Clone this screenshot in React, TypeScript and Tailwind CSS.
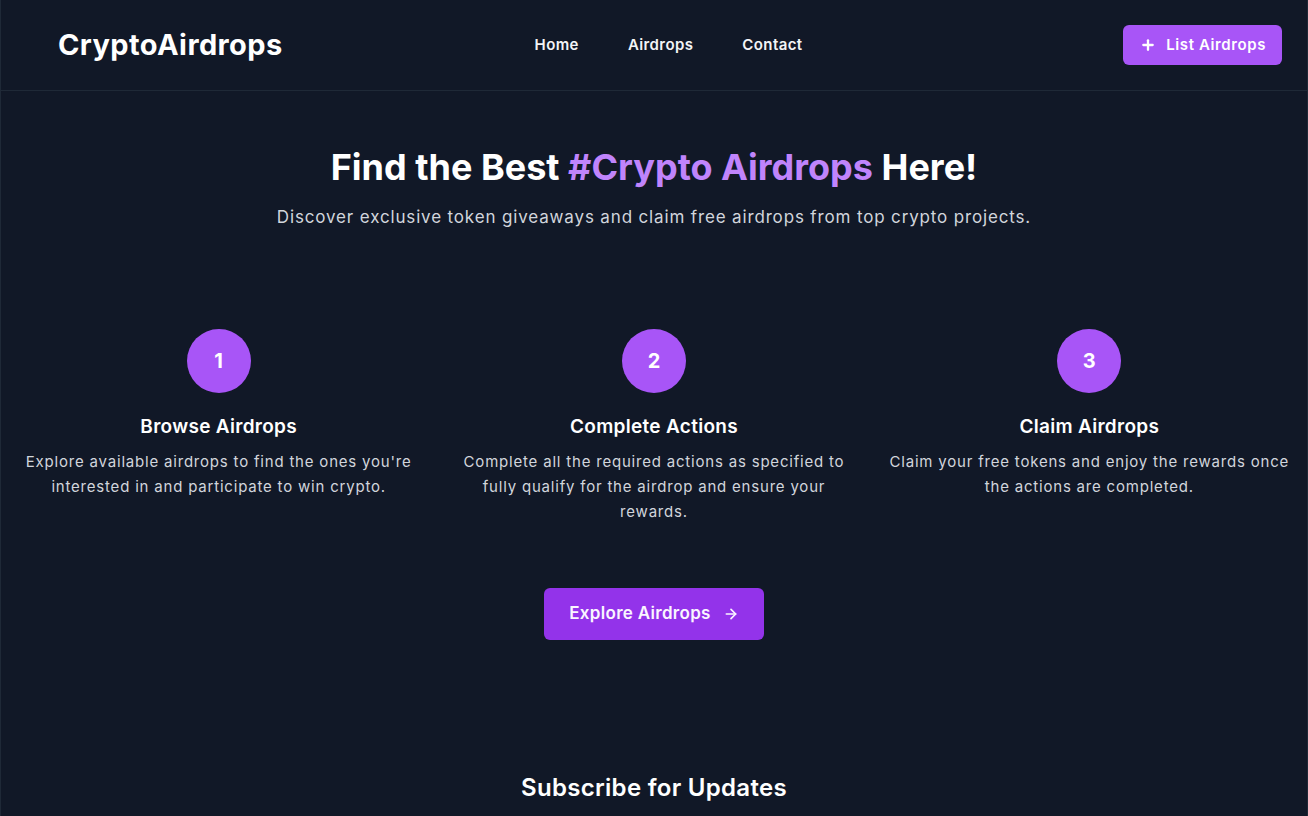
import { Plus, ArrowRight } from 'lucide-react'

const steps = [
  {
    id: 1,
    title: 'Browse Airdrops',
    text: "Explore available airdrops to find the ones you're interested in and participate to win crypto.",
  },
  {
    id: 2,
    title: 'Complete Actions',
    text: 'Complete all the required actions as specified to fully qualify for the airdrop and ensure your rewards.',
  },
  {
    id: 3,
    title: 'Claim Airdrops',
    text: 'Claim your free tokens and enjoy the rewards once the actions are completed.',
  },
]

function App() {
  return (
    <div
      className="min-h-screen bg-[#111827] text-white border-x border-[#1f2937]"
      style={{ fontFamily: 'Inter, "Noto Sans", sans-serif' }}
    >
      {/* Header */}
      <header className="border-b border-[#1f2937]">
        <div className="flex items-center h-[90px] pl-[57px] pr-[25px]">
          <h1 className="text-[29px] font-bold tracking-[0.4px] text-white">CryptoAirdrops</h1>
          <nav className="flex items-center gap-[49px] ml-[252px] text-[15px] font-semibold tracking-[0.4px] text-gray-100">
            <a href="#">Home</a>
            <a href="#">Airdrops</a>
            <a href="#">Contact</a>
          </nav>
          <button className="ml-auto flex items-center gap-[10px] h-10 pl-[17px] pr-4 rounded-md bg-[#a855f7] text-[15px] font-semibold tracking-[0.6px] text-white">
            <Plus className="w-4 h-4" strokeWidth={3.5} />
            List Airdrops
          </button>
        </div>
      </header>

      {/* Hero */}
      <main>
        <section className="pt-[56px] text-center">
          <h2 className="text-4xl leading-10 font-bold">
            Find the Best <span className="text-[#c084fc]">#Crypto Airdrops</span> Here!
          </h2>
          <p className="mt-4 text-[17px] leading-7 tracking-[0.85px] text-gray-300">
            Discover exclusive token giveaways and claim free airdrops from top crypto projects.
          </p>
        </section>

        {/* Steps */}
        <section className="grid grid-cols-3 mt-[98px]">
          {steps.map(step => (
            <div key={step.id} className="flex flex-col items-center px-4 text-center">
              <div className="flex items-center justify-center w-16 h-16 rounded-full bg-[#a855f7] text-xl font-bold">
                {step.id}
              </div>
              <h3 className="mt-5 text-[19px] leading-7 font-semibold tracking-[0.3px]">{step.title}</h3>
              <p className="mt-2 text-[15px] leading-[25px] tracking-[0.8px] text-gray-300">{step.text}</p>
            </div>
          ))}
        </section>

        <div className="flex justify-center mt-16">
          <button className="flex items-center gap-3 h-[52px] px-[25px] rounded-md bg-[#9333ea] text-[17px] font-semibold tracking-[0.3px] text-purple-50">
            Explore Airdrops
            <ArrowRight className="w-4 h-4" strokeWidth={2.5} />
          </button>
        </div>

        <section className="mt-[132px] text-center">
          <h2 className="text-2xl leading-8 font-semibold tracking-[0.3px]">Subscribe for Updates</h2>
        </section>
      </main>
    </div>
  )
}

export default App
